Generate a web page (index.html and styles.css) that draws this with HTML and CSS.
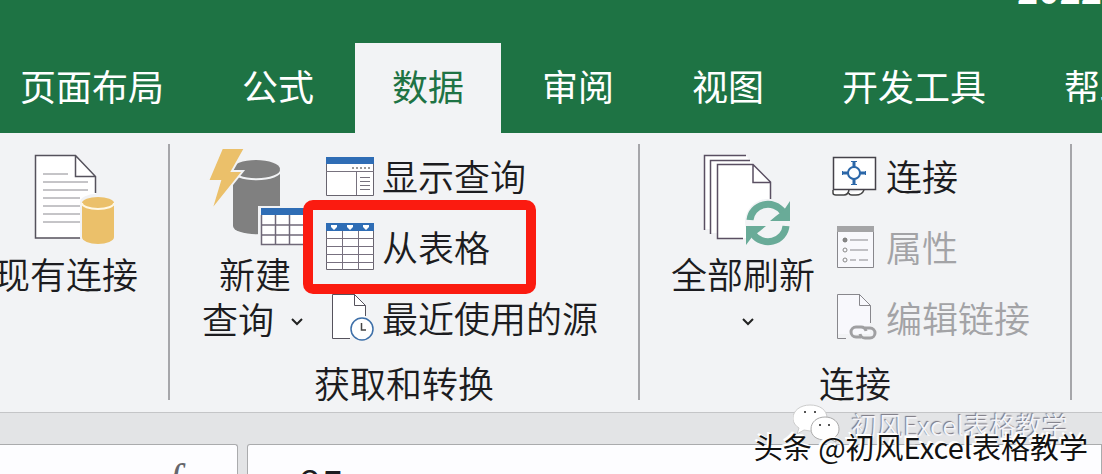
FILE: index.html
```html
<!DOCTYPE html>
<html lang="zh-CN">
<head>
  <meta charset="UTF-8" />
  <meta name="viewport" content="width=device-width, initial-scale=1.0"/>
  <title>Excel 数据</title>
  <link rel="stylesheet" href="styles.css">
</head>
<body>

  <header class="titlebar">
    <div class="title">2022</div>
    <nav class="tabs">
      <button class="tab">页面布局</button>
      <button class="tab">公式</button>
      <button class="tab active">数据</button>
      <button class="tab">审阅</button>
      <button class="tab">视图</button>
      <button class="tab">开发工具</button>
      <button class="tab">帮助</button>
    </nav>
  </header>

  <main class="ribbon">
    <section class="group group-existing">
      <div class="group-body">
        <button class="big-btn">
          <svg class="big-icon" width="96" height="106" viewBox="0 0 96 106">
            <path d="M17 15.500H58L78 36V98H17.500z" fill="#fff"/>
            <path d="M63 98H17.500V15.500H57.500L77.500 36.500V53M57.500 15.500V36.500H77.500" fill="none" stroke="#55525c" stroke-width="1.500"/>
            <path d="M25 34H50M25 42H70M25 50H70M25 58H62M25 66H62M25 74H62M25 82H62" stroke="#8b8a90"/>
            <path d="M62 62a17 8 0 0 1 35 0V98a17 7 0 0 1-35 0z" fill="#f2f3f5"/>
            <path d="M64 63V97a16 7 0 0 0 32 0V63z" fill="#ebc06a"/>
            <ellipse cx="80" cy="63" rx="16" ry="6" fill="#ebc06a"/>
            <path d="M64 63a16 6 0 0 0 32 0" fill="none" stroke="#fff8e4" stroke-width="2"/>
          </svg>
          <span>现有连接</span>
        </button>
      </div>
    </section>

    <section class="group group-get">
      <div class="group-body">
        <button class="big-btn">
          <svg class="big-icon" width="98" height="106" viewBox="0 0 98 106">
            <path d="M27 30V86a23 8 0 0 0 47 0V30z" fill="#808080"/>
            <ellipse cx="50" cy="29" rx="24" ry="9" fill="#808080"/>
            <path d="M26 30a24 9 0 0 0 49 0" fill="none" stroke="#f2f3f5" stroke-width="2"/>
            <path d="M16 8H39L26 31H37L5 71L14 41H2z" fill="#ebc06a" stroke="#f2f3f5" stroke-width="2"/>
            <path d="M52 66H98V106H52z" fill="#f2f3f5"/>
            <path d="M55 69H98V105H55z" fill="#fff"/>
            <path d="M55 68H98V75H55z" fill="#2f6db5"/>
            <path d="M55.500 75V104.500H98M55 85H98M55 95H98M69.500 75V104M83.500 75V104" fill="none" stroke="#6f6878" stroke-width="1.500"/>
          </svg>
          <span>新建</span>
          <span class="with-arrow">查询
            <svg class="arrow" width="14" height="8" viewBox="0 0 14 8"><path d="M2 1L7 6L12 1" fill="none" stroke="#222" stroke-width="2"/></svg>
          </span>
        </button>
        <div class="small-list">
          <button class="small-btn">
            <svg width="48" height="48" viewBox="0 0 48 48">
              <path d="M.5 5.500H47.500V43.500H.5z" fill="#fff" stroke="#68646f"/>
              <path d="M0 5H48V12H0z" fill="#2f6db5"/>
              <path d="M0 19.500H48M30.500 19.500V43" fill="none" stroke="#77727e"/>
              <path d="M26 16H45" stroke="#999" stroke-width="2" stroke-dasharray="2 2"/>
              <path d="M34 25.500H44M34 29.500H44M34 33.500H44M34 37.500H44" stroke="#77727e"/>
            </svg>
            <span>显示查询</span>
          </button>
          <button class="small-btn highlighted">
            <svg width="48" height="48" viewBox="0 0 48 48">
              <path d="M.5 1.500H47.500V46.500H.5z" fill="#fff" stroke="#68646f"/>
              <path d="M0 0H48V8H0z" fill="#2f6db5"/>
              <path d="M5 2h6v2l-3 3l-3-3zM21 2h6v2l-3 3l-3-3zM37 2h6v2l-3 3l-3-3z" fill="#fff"/>
              <path d="M0 15.500H48M0 23.500H48M0 31.500H48M0 39.500H48M16.500 8V47M32.500 8V47" stroke="#77707f"/>
            </svg>
            <span>从表格</span>
          </button>
          <button class="small-btn">
            <svg width="48" height="48" viewBox="0 0 48 48">
              <path d="M6.500 0V44H24L39 30V11L28 0z" fill="#fff"/>
              <path d="M24 44.500H6.500V.5H28.500L39.500 11.500V22M28.500 0V11.500H39.500" fill="none" stroke="#55525c"/>
              <circle cx="36" cy="35" r="11" fill="#fff" stroke="#3d6fa8" stroke-width="1.500"/>
              <path d="M35.500 29V36H40" fill="none" stroke="#444" stroke-width="1.500"/>
            </svg>
            <span>最近使用的源</span>
          </button>
        </div>
      </div>
      <div class="group-name">获取和转换</div>
    </section>

    <section class="group group-connect">
      <div class="group-body">
        <button class="big-btn">
          <svg class="big-icon" width="96" height="106" viewBox="0 0 96 106">
            <path d="M5 16H46L70 43V98H17V93H11V89H5z" fill="#fff"/>
            <path d="M4.500 90V15.500H46M10.500 94V20.500H50M43 98.500H17.500V24.500H53L70.500 42V59M53 24.500V42.500H70.500" fill="none" stroke="#5a4f62" stroke-width="1.500"/>
            <circle cx="68" cy="82" r="23" fill="#f2f3f5"/>
            <path d="M50 80a18 17 0 0 1 33-8" fill="none" stroke="#69ab98" stroke-width="7"/>
            <path d="M90 61V81H70L76 76L84 70z" fill="#69ab98"/>
            <path d="M86 86a18 17 0 0 1-33 8" fill="none" stroke="#69ab98" stroke-width="7"/>
            <path d="M46 105V86H66L60 91L52 97z" fill="#69ab98"/>
          </svg>
          <span>全部刷新</span>
          <span class="with-arrow">
            <svg class="arrow" width="14" height="8" viewBox="0 0 14 8"><path d="M2 1L7 6L12 1" fill="none" stroke="#222" stroke-width="2"/></svg>
          </span>
        </button>
        <div class="small-list">
          <button class="small-btn">
            <svg width="46" height="48" viewBox="0 0 46 48">
              <path d="M1 38V41q0 2 3 2H12q4 0 5-5M17 41q0 2 3 2H24q6 0 8-5" fill="#fff" stroke="#444" stroke-width="1.500"/>
              <path d="M1.500 5.500H43.500V37.500H1.500z" fill="#fff" stroke="#45424a" stroke-width="1.500"/>
              <circle cx="22" cy="21" r="6" fill="none" stroke="#2b67a8" stroke-width="2"/>
              <path d="M22 15V9M22 27V33M16 21H10M28 21H34" stroke="#2b67a8" stroke-width="3"/>
              <path d="M19 9.500H25M19 32.500H25M10.500 19V23M33.500 19V23" stroke="#2b67a8"/>
            </svg>
            <span>连接</span>
          </button>
          <button class="small-btn" disabled>
            <svg width="46" height="48" viewBox="0 0 46 48">
              <path d="M5.500 3.500H41.500V44.500H5.500z" fill="#f8f8fc" stroke="#88878c"/>
              <path d="M5 3H42V9H5z" fill="#a4a4a6"/>
              <circle cx="13" cy="17" r="2" fill="#888" stroke="#777"/>
              <circle cx="13" cy="27" r="2" fill="none" stroke="#888"/>
              <circle cx="13" cy="37" r="2" fill="none" stroke="#888"/>
              <path d="M18 17H36M18 27H36M18 37H24M27 37H36" stroke="#88878c"/>
            </svg>
            <span>属性</span>
          </button>
          <button class="small-btn" disabled>
            <svg width="46" height="48" viewBox="0 0 46 48">
              <path d="M5 0H27L38 11V40H5z" fill="#f8f8fc"/>
              <path d="M14 44.500H5.500V.5H27.500L38.500 11.500V29M27.500 0V11.500H38.500" fill="none" stroke="#88878c"/>
              <g fill="none" stroke="#a0a0a2" stroke-width="3">
                <path d="M29 43H24a5 5 0 0 1 0-10H29q4 0 5 4"/>
                <path d="M33 34H38a5 5 0 0 1 0 10H33q-4 0-5-4"/>
              </g>
            </svg>
            <span>编辑链接</span>
          </button>
        </div>
      </div>
      <div class="group-name">连接</div>
    </section>
  </main>

  <footer class="formula-row">
    <div class="fx-box"><span>✓</span><i>fx</i></div>
    <div class="formula-box">85</div>
  </footer>

  <div class="watermark-wechat">
    <svg width="48" height="42" viewBox="0 0 48 42">
      <path d="M17 1C7 1 0 7 0 14c0 5 3 8 6 10l-2 6l7-4l6 1c10 0 17-5 17-13S27 1 17 1z" fill="#fff" stroke="#ccc"/>
      <path d="M32 13c-8 0-14 5-14 12s6 11 14 11l5-1l6 3l-1-5c3-2 4-5 4-8c0-7-6-12-14-12z" fill="#fff" stroke="#aaa"/>
      <path d="M11 8h2M21 8h2M26 21h2M35 21h2" stroke="#555" stroke-width="2"/>
    </svg>
    <span>初风Excel表格教学</span>
  </div>
  <div class="watermark-author">头条 @初风Excel表格教学</div>

</body>
</html>
```
FILE: styles.css
```css
*,
*::after {
  box-sizing: border-box;
}

body {
  margin: 0;
  height: 100vh;
  position: relative;
  display: flex;
  flex-direction: column;
  overflow: hidden;
  font-family: "Noto Sans CJK SC", sans-serif;
  font-size: 36px;
  font-weight: 350;
  line-height: 45px;
  color: #1c1c20;
  background: #f2f3f5;
}

button {
  padding: 0;
  border: none;
  background: none;
  color: inherit;
  font: inherit;
  white-space: nowrap;
}

svg {
  display: block;
  flex: none;
}

.titlebar {
  position: relative;
  flex: none;
  padding-top: 43px;
  overflow: hidden;
  background: #1e7344;
  color: #fff;
}

.title {
  position: absolute;
  top: -34px;
  right: 0;
  font-weight: 700;
}

.tabs {
  display: flex;
  gap: 4px;
  margin-left: -17px;
}

.tab {
  flex: none;
  height: 90px;
  padding: 0 37px 5px;
  font-weight: 400;
}

.tab.active {
  background: #f2f3f5;
  color: #1e7344;
}

.ribbon {
  flex: none;
  display: flex;
  padding: 11px 0 12px;
}

.group {
  flex: none;
  height: 256px;
  border-right: 2px solid #a6a6aa;
}

.group-existing {
  width: 170px;
}

.group-get {
  width: 470px;
}

.group-connect {
  width: 432px;
}

.group-body {
  display: flex;
  height: 220px;
  margin-top: -4px;
}

.group-existing .group-body {
  justify-content: center;
  padding-right: 36px;
}

.group-get .group-body {
  padding-left: 32px;
}

.group-connect .group-body {
  padding-left: 31px;
}

.big-btn {
  display: flex;
  flex-direction: column;
  align-items: center;
  align-self: flex-start;
}

.big-icon {
  margin-bottom: 5px;
}

.group-get .big-btn {
  width: 106px;
}

.group-connect .big-icon,
.group-connect .arrow {
  margin-left: 10px;
}

.with-arrow {
  display: flex;
  align-items: center;
  gap: 16px;
  height: 45px;
}

.group-get .with-arrow {
  margin-right: 4px;
}

.arrow {
  margin-top: 6px;
}

.group-get .small-list {
  margin-left: 18px;
}

.group-connect .small-list {
  margin-left: 17px;
}

.small-btn {
  position: relative;
  display: flex;
  align-items: center;
  gap: 8px;
  height: 71px;
}

.small-btn:disabled {
  color: #a3a3a6;
}

/* red marker round the button, drawn over its neighbours */
.highlighted::after {
  content: "";
  position: absolute;
  z-index: 1;
  top: -11px;
  left: -23px;
  width: 233px;
  height: 94px;
  border: 10px solid #fb1b10;
  border-radius: 10px;
}

.group-name {
  text-align: center;
}

.formula-row {
  flex: 1;
  min-height: 0;
  display: flex;
  gap: 9px;
  padding-top: 31px;
  overflow: hidden;
  border-top: 1px solid #c4c5c7;
  background: #e3e4e6;
}

.fx-box,
.formula-box {
  overflow: hidden;
  border: 1px solid #aaabad;
  border-bottom: none;
  background: #fdfdff;
}

.fx-box {
  display: flex;
  gap: 78px;
  width: 238px;
  padding: 12px 0 0 66px;
  border-left: none;
  border-radius: 0 3px 0 0;
  font-family: "Liberation Serif", serif;
  font-size: 42px;
  color: #66666c;
}

.fx-box span {
  padding-top: 12px;
  font-size: 36px;
}

.formula-box {
  flex: 1;
  padding: 16px 0 0 50px;
  border-radius: 3px 0 0 0;
  font-size: 42px;
}

.watermark-wechat,
.watermark-author {
  position: absolute;
  white-space: nowrap;
}

.watermark-wechat {
  right: 34px;
  bottom: 28px;
  display: flex;
  align-items: center;
  gap: 10px;
  font-size: 26px;
  line-height: 42px;
  color: #f4f4f8;
  text-shadow: -1px -1px 1px #77757f;
}

.watermark-author {
  right: 14px;
  bottom: 10px;
  font-size: 29px;
  font-weight: 400;
  line-height: 36px;
  color: #111;
  text-shadow: -1px -1px 0 #fff, -2px -2px 0 #fff;
}
```
